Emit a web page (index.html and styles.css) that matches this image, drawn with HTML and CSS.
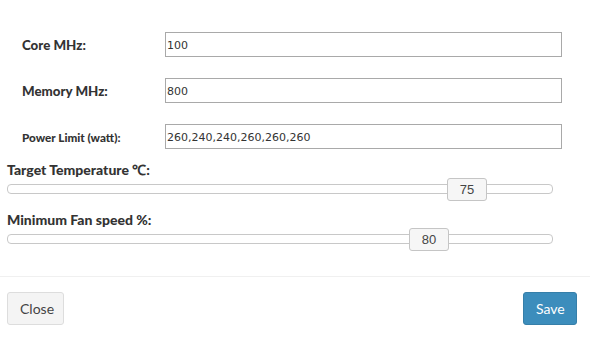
FILE: index.html
```html
<!DOCTYPE html>
<html>
<head>
<meta charset="utf-8">
<link rel="stylesheet" href="styles.css">
</head>
<body>
<div class="modal">
  <div class="modal-body">
    <div class="form-row">
      <label class="lbl">Core MHz:</label>
      <input class="txt" type="text" value="100">
    </div>
    <div class="form-row">
      <label class="lbl">Memory MHz:</label>
      <input class="txt" type="text" value="800">
    </div>
    <div class="form-row">
      <label class="lbl lbl-sm">Power Limit (watt):</label>
      <input class="txt" type="text" value="260,240,240,260,260,260">
    </div>
    <div class="slider-group">
      <div class="slider-label">Target Temperature ℃:</div>
      <div class="track">
        <div class="handle" style="left: 439px">75</div>
      </div>
    </div>
    <div class="slider-group">
      <div class="slider-label">Minimum Fan speed %:</div>
      <div class="track">
        <div class="handle" style="left: 401px">80</div>
      </div>
    </div>
  </div>
  <div class="modal-footer">
    <button class="btn btn-default">Close</button>
    <button class="btn btn-primary">Save</button>
  </div>
</div>
</body>
</html>
```

FILE: styles.css
```css
html, body {
  margin: 0;
  padding: 0;
  background: #fff;
}
.modal {
  width: 590px;
  font-family: "Lato", "Open Sans", sans-serif;
  color: #333;
}
.modal-body {
  padding: 32px 28px 32px 7px;
}
.form-row {
  display: flex;
  align-items: center;
  height: 25px;
  margin-bottom: 21px;
}
.form-row:nth-child(3) {
  margin-bottom: 12px;
}
.lbl {
  width: 143px;
  padding-left: 15px;
  font-weight: 900;
  font-size: 13.3px;
  color: #333;
}
.lbl-sm {
  font-size: 11.7px;
}
.txt {
  box-sizing: border-box;
  width: 397px;
  height: 25px;
  margin: 0;
  padding: 1px 2px 0 1px;
  border: 1px solid #a9a9a9;
  font-family: "DejaVu Sans", sans-serif;
  font-size: 11px;
  color: #333;
  outline: none;
}
.slider-group {
  margin-bottom: 17px;
}
.slider-group:last-child {
  margin-bottom: 0;
}
.slider-label {
  font-weight: 900;
  font-size: 14px;
  line-height: 18px;
  color: #333;
}
.track {
  position: relative;
  margin-top: 5px;
  width: 546px;
  height: 10px;
  box-sizing: border-box;
  border: 1px solid #c8c8c8;
  border-radius: 4px;
  background: #fff;
}
.handle {
  position: absolute;
  top: -7px;
  width: 40px;
  height: 23px;
  box-sizing: border-box;
  border: 1px solid #c5c5c5;
  border-radius: 3px;
  background: #f6f6f6;
  font-family: "Liberation Sans", Arial, sans-serif;
  font-size: 13px;
  line-height: 21px;
  text-align: center;
  color: #454545;
}
.modal-footer {
  border-top: 1px solid #f0f0f0;
  padding: 15px 13px 15px 7px;
  display: flex;
  justify-content: space-between;
}
.btn {
  height: 33px;
  box-sizing: border-box;
  border-radius: 3px;
  font-family: "Lato", "Open Sans", sans-serif;
  font-size: 14px;
  padding: 0 12px;
  cursor: pointer;
}
.btn-default {
  width: 57px;
  background: #f4f4f4;
  border: 1px solid #ddd;
  color: #444;
}
.btn-primary {
  width: 54px;
  background: #3c8dbc;
  border: 1px solid #367fa9;
  color: #fff;
}
```
